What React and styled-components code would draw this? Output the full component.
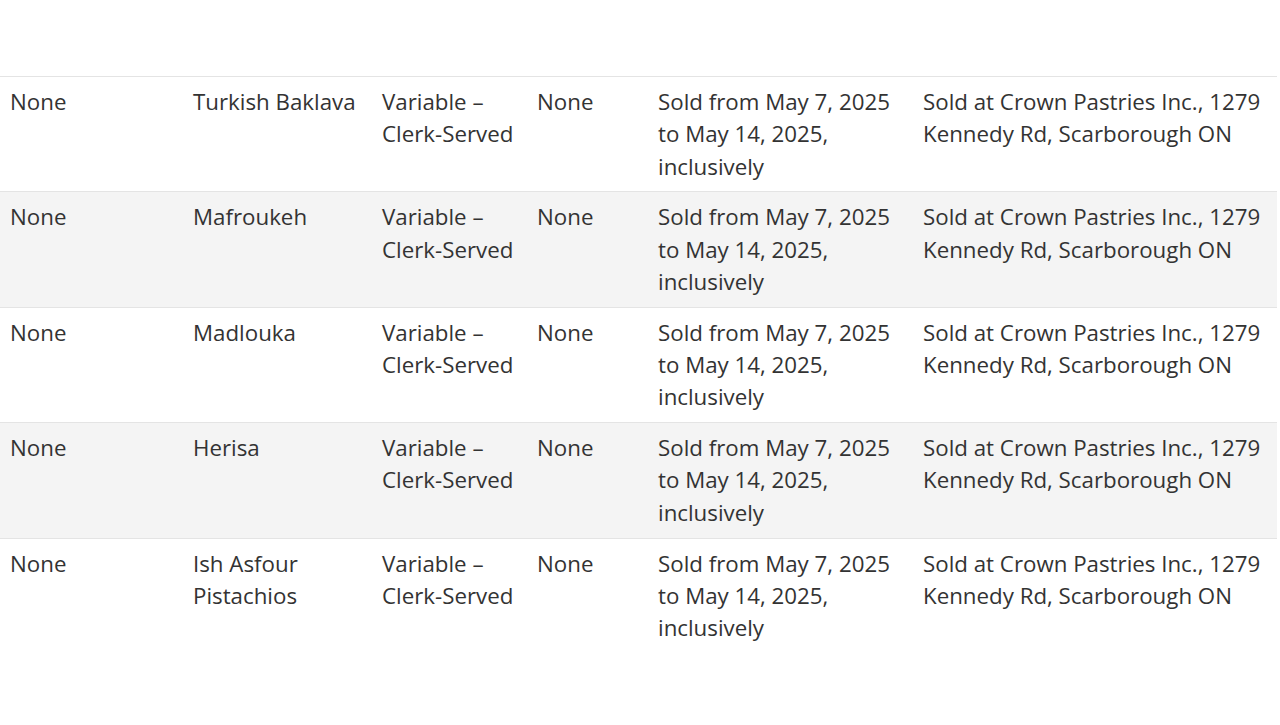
import React from "react";
import styled, { createGlobalStyle } from "styled-components";

const GlobalStyle = createGlobalStyle`
  html, body {
    margin: 0;
    padding: 0;
    background: #ffffff;
  }
  body {
    font-family: "Open Sans", "Noto Sans", sans-serif;
    color: #333333;
  }
`;

const Page = styled.div`
  padding-top: 76px;
  width: 1277px;
`;

const Table = styled.table`
  width: 100%;
  border-collapse: collapse;
  table-layout: fixed;
  font-size: 22.3px;
  line-height: 32.3px;
`;

const Row = styled.tr`
  background: ${p => (p.$striped ? "#f4f4f4" : "#ffffff")};
  border-top: 1px solid #e4e4e4;
`;

const Cell = styled.td`
  vertical-align: top;
  padding: 9px 10px 8.5px 10px;
  text-align: left;
`;

const columns = [183, 189, 155, 121, 265, 364];

const items = [
  "Turkish Baklava",
  "Mafroukeh",
  "Madlouka",
  "Herisa",
  "Ish Asfour Pistachios",
];

export default function App() {
  return (
    <>
      <GlobalStyle />
      <Page>
        <Table>
          <colgroup>
            {columns.map((w, i) => (
              <col key={i} style={{ width: w }} />
            ))}
          </colgroup>
          <tbody>
            {items.map((name, i) => (
              <Row key={name} $striped={i % 2 === 1}>
                <Cell>None</Cell>
                <Cell>{name}</Cell>
                <Cell>Variable – Clerk-Served</Cell>
                <Cell>None</Cell>
                <Cell>Sold from May 7, 2025 to May 14, 2025, inclusively</Cell>
                <Cell>Sold at Crown Pastries Inc., 1279 Kennedy Rd, Scarborough ON</Cell>
              </Row>
            ))}
          </tbody>
        </Table>
      </Page>
    </>
  );
}
